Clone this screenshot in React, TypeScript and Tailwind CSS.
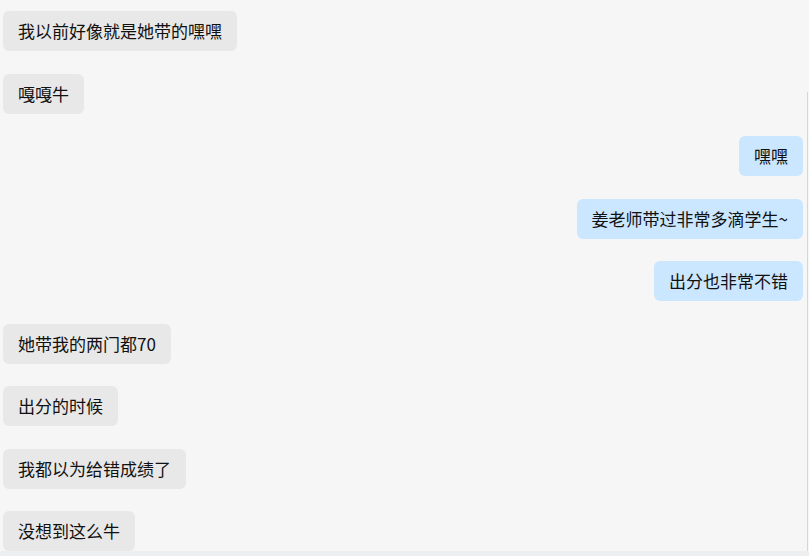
import React from 'react';

const messages = [
  { text: '我以前好像就是她带的嘿嘿', mine: false },
  { text: '嘎嘎牛', mine: false },
  { text: '嘿嘿', mine: true },
  { text: '姜老师带过非常多滴学生~', mine: true },
  { text: '出分也非常不错', mine: true },
  { text: '她带我的两门都70', mine: false },
  { text: '出分的时候', mine: false },
  { text: '我都以为给错成绩了', mine: false },
  { text: '没想到这么牛', mine: false },
];

const App: React.FC = () => {
  return (
    <div
      className="relative w-[809px] h-[556px] overflow-hidden bg-[#f6f6f6] flex flex-col"
      style={{ fontFamily: '"Microsoft YaHei", "Noto Sans CJK SC", sans-serif' }}
    >
      <div className="flex-1 flex flex-col gap-[22.5px] pt-[11px] pl-[3px] pr-[6px]">
        {messages.map((m, i) => (
          <div key={i} className={`flex ${m.mine ? 'justify-end' : 'justify-start'}`}>
            <div
              className={`h-[40px] px-[15px] flex items-center rounded-md text-[17px] leading-6 text-[#111] ${
                m.mine ? 'bg-[#cbe6ff]' : 'bg-[#e8e8e8]'
              }`}
            >
              {m.text}
            </div>
          </div>
        ))}
      </div>
      <div className="h-[5px] bg-[#eceef0]" />
      <div className="absolute right-[1px] top-[92px] bottom-[5px] w-px bg-[#d6d6d6]" />
    </div>
  );
};

export default App;
